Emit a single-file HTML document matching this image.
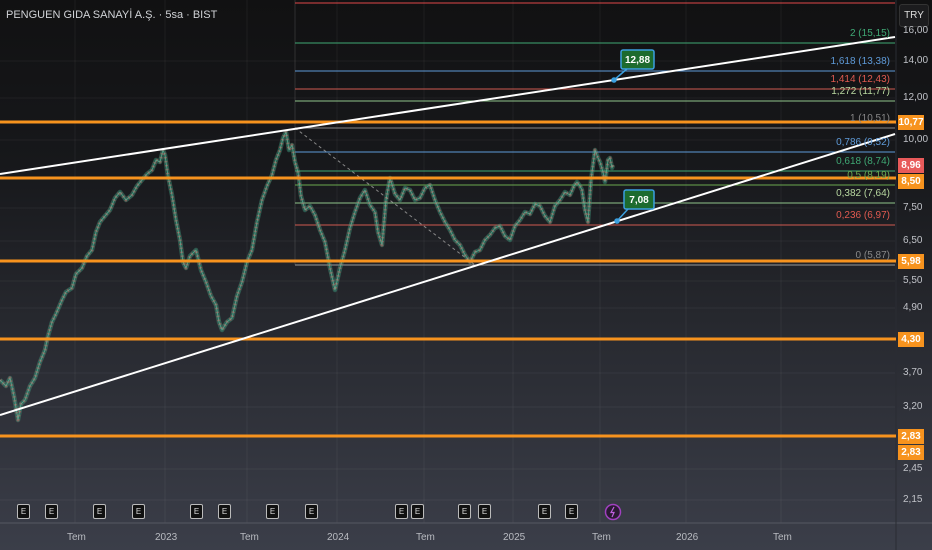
<!DOCTYPE html>
<html><head><meta charset="utf-8"><style>
html,body{margin:0;padding:0}
body{width:932px;height:550px;overflow:hidden;background:linear-gradient(#111112 0%,#17181b 30%,#2a2c33 65%,#3b3e49 100%);font-family:"Liberation Sans",sans-serif;position:relative}
.t{position:absolute;font-size:10px;color:#b8bac0;white-space:nowrap}
.ax{position:absolute;left:903px;font-size:10px;color:#c0c2c8}
.b{position:absolute;left:898px;width:26px;height:15px;font-size:10px;line-height:15px;text-align:center;color:#fff;background:#f7931e;font-weight:bold}
.e{position:absolute;top:504px;width:11px;height:13px;border:1px solid #bbb;border-radius:2px;background:#111;color:#ddd;font-size:8px;line-height:13px;text-align:center}
.f{position:absolute;font-size:10px;right:42px;white-space:nowrap}
</style></head><body>
<svg width="932" height="550" style="position:absolute;left:0;top:0">
<defs>
<polyline id="pp" points="0,380 6,386 10,378 14,396 18,420 21,404 25,400 30,386 35,378 40,362 45,350 48,336 52,322 56,314 62,300 66,292 72,288 76,274 82,268 87,256 92,250 96,232 100,222 105,216 110,210 115,198 120,192 126,200 132,195 137,186 142,180 147,174 152,170 156,160 160,162 163,150 165,155 168,176 172,195 176,220 180,240 183,262 186,268 190,256 196,250 201,270 206,282 211,296 216,305 219,322 222,330 227,322 232,318 237,296 242,282 247,262 252,250 257,222 262,200 267,186 272,175 276,160 280,150 283,138 286,132 289,150 292,145 295,162 298,172 301,196 305,210 310,206 315,215 320,230 325,242 330,268 335,290 340,268 345,250 350,228 355,212 360,198 365,190 370,205 375,212 378,232 382,245 386,200 390,178 395,194 400,200 405,188 410,190 415,200 420,198 425,188 430,185 435,200 440,212 445,222 450,230 455,240 460,245 465,255 470,262 475,252 480,250 485,240 490,235 495,228 500,226 505,236 510,240 515,226 520,220 525,212 530,214 535,204 540,206 545,216 550,222 555,206 560,200 565,192 570,195 574,186 577,182 580,186 582,190 585,210 588,222 591,180 595,150 598,158 600,162 603,172 605,182 608,160 610,158 612,168 613,165"/>
</defs>
<g stroke="#ffffff" stroke-opacity="0.05" stroke-width="1">
<line x1="75" y1="0" x2="75" y2="523"/><line x1="165" y1="0" x2="165" y2="523"/><line x1="247" y1="0" x2="247" y2="523"/><line x1="337" y1="0" x2="337" y2="523"/><line x1="424" y1="0" x2="424" y2="523"/><line x1="513" y1="0" x2="513" y2="523"/><line x1="600" y1="0" x2="600" y2="523"/><line x1="686" y1="0" x2="686" y2="523"/><line x1="781" y1="0" x2="781" y2="523"/>
<line x1="0" y1="61" x2="895" y2="61"/><line x1="0" y1="98" x2="895" y2="98"/><line x1="0" y1="140" x2="895" y2="140"/><line x1="0" y1="208" x2="895" y2="208"/><line x1="0" y1="241" x2="895" y2="241"/><line x1="0" y1="281" x2="895" y2="281"/><line x1="0" y1="308" x2="895" y2="308"/><line x1="0" y1="373" x2="895" y2="373"/><line x1="0" y1="407" x2="895" y2="407"/><line x1="0" y1="469" x2="895" y2="469"/><line x1="0" y1="500" x2="895" y2="500"/>
</g>
<line x1="0" y1="523" x2="932" y2="523" stroke="#555862" stroke-width="1"/>
<line x1="896" y1="0" x2="896" y2="550" stroke="#2a2c33" stroke-width="1"/>
<line x1="295" y1="0" x2="295" y2="265" stroke="#888" stroke-opacity="0.25"/>
<g stroke-width="1">
<line x1="295" y1="3" x2="895" y2="3" stroke="#e04848"/>
<line x1="295" y1="43" x2="895" y2="43" stroke="#3fa874"/>
<line x1="295" y1="71" x2="895" y2="71" stroke="#5e9ad8"/>
<line x1="295" y1="89" x2="895" y2="89" stroke="#d05a50"/>
<line x1="295" y1="101" x2="895" y2="101" stroke="#8fc48a"/>
<line x1="295" y1="128" x2="895" y2="128" stroke="#888"/>
<line x1="295" y1="152" x2="895" y2="152" stroke="#5e9ad8"/>
<line x1="295" y1="171" x2="895" y2="171" stroke="#3fa874"/>
<line x1="295" y1="185" x2="895" y2="185" stroke="#6aa84f"/>
<line x1="295" y1="203" x2="895" y2="203" stroke="#8fc48a"/>
<line x1="295" y1="225" x2="895" y2="225" stroke="#d05a50"/>
<line x1="295" y1="265" x2="895" y2="265" stroke="#999"/>
</g>
<line x1="295" y1="128" x2="475" y2="265" stroke="#888" stroke-dasharray="3,3"/>
<g fill="none" stroke-linejoin="round">
<use href="#pp" stroke="#3d9e80" stroke-opacity="0.45" stroke-width="4.5"/>
<use href="#pp" stroke="#c45a5a" stroke-opacity="0.6" stroke-width="3" stroke-dasharray="1.5,2.5"/>
<use href="#pp" stroke="#5fb89a" stroke-opacity="0.7" stroke-width="1"/>
</g>
<g stroke="#f7931e" stroke-width="3">
<line x1="0" y1="122" x2="896" y2="122"/><line x1="0" y1="178" x2="896" y2="178"/><line x1="0" y1="261" x2="896" y2="261"/><line x1="0" y1="339" x2="896" y2="339"/><line x1="0" y1="436" x2="896" y2="436"/>
</g>
<g stroke="#fff" stroke-width="2">
<line x1="0" y1="174" x2="895" y2="37"/>
<line x1="0" y1="415" x2="895" y2="134"/>
</g>
<g stroke="#3ba0e0" stroke-width="1.5" fill="#3ba0e0">
<line x1="614" y1="80" x2="628" y2="68"/><circle cx="614" cy="80" r="2"/>
<line x1="617" y1="221" x2="628" y2="209"/><circle cx="617" cy="221" r="2"/>
</g>
<rect x="621" y="50" width="33" height="19" rx="2" fill="#1d6b2e" stroke="#3ba0e0" stroke-width="1.5"/>
<text x="637.5" y="63" fill="#fff" font-size="10" font-weight="bold" text-anchor="middle" font-family="Liberation Sans">12,88</text>
<rect x="624" y="190" width="30" height="19" rx="2" fill="#1d6b2e" stroke="#3ba0e0" stroke-width="1.5"/>
<text x="639" y="203" fill="#fff" font-size="10" font-weight="bold" text-anchor="middle" font-family="Liberation Sans">7,08</text>
<circle cx="613" cy="512" r="7.5" fill="#2a1a33" stroke="#a040c0" stroke-width="1.5"/>
<path d="M614 507 L611 512.5 L614 512.5 L612 517" stroke="#c060e0" fill="none" stroke-width="1.2"/>
</svg>
<div class="t" style="left:6px;top:9px;font-size:11px;color:#d0d2d6">PENGUEN GIDA SANAYİ A.Ş. · 5sa · BIST</div>
<div class="f" style="top:28px;color:#3fa874">2 (15,15)</div>
<div class="f" style="top:56px;color:#5e9ad8">1,618 (13,38)</div>
<div class="f" style="top:74px;color:#e05a50">1,414 (12,43)</div>
<div class="f" style="top:86px;color:#b8d8a0">1,272 (11,77)</div>
<div class="f" style="top:113px;color:#888">1 (10,51)</div>
<div class="f" style="top:137px;color:#5e9ad8">0,786 (9,52)</div>
<div class="f" style="top:156px;color:#3fa874">0,618 (8,74)</div>
<div class="f" style="top:170px;color:#6aa84f">0,5 (8,19)</div>
<div class="f" style="top:188px;color:#b8d8a0">0,382 (7,64)</div>
<div class="f" style="top:210px;color:#e05a50">0,236 (6,97)</div>
<div class="f" style="top:250px;color:#888">0 (5,87)</div>
<div style="position:absolute;left:899px;top:4px;width:28px;height:21px;border:1px solid #333;border-radius:3px;background:#1c1c1e;color:#ddd;font-size:10px;line-height:21px;text-align:center">TRY</div>
<div class="ax" style="top:25px">16,00</div>
<div class="ax" style="top:55px">14,00</div>
<div class="ax" style="top:92px">12,00</div>
<div class="ax" style="top:134px">10,00</div>
<div class="ax" style="top:202px">7,50</div>
<div class="ax" style="top:235px">6,50</div>
<div class="ax" style="top:275px">5,50</div>
<div class="ax" style="top:302px">4,90</div>
<div class="ax" style="top:367px">3,70</div>
<div class="ax" style="top:401px">3,20</div>
<div class="ax" style="top:463px">2,45</div>
<div class="ax" style="top:494px">2,15</div>
<div class="b" style="top:115px">10,77</div>
<div class="b" style="top:158px;background:#e85a5a">8,96</div>
<div class="b" style="top:174px">8,50</div>
<div class="b" style="top:254px">5,98</div>
<div class="b" style="top:332px">4,30</div>
<div class="b" style="top:429px">2,83</div>
<div class="b" style="top:445px">2,83</div>
<div class="e" style="left:17px">E</div><div class="e" style="left:45px">E</div><div class="e" style="left:93px">E</div><div class="e" style="left:132px">E</div><div class="e" style="left:190px">E</div><div class="e" style="left:218px">E</div><div class="e" style="left:266px">E</div><div class="e" style="left:305px">E</div><div class="e" style="left:395px">E</div><div class="e" style="left:411px">E</div><div class="e" style="left:458px">E</div><div class="e" style="left:478px">E</div><div class="e" style="left:538px">E</div><div class="e" style="left:565px">E</div>
<div class="t" style="left:67px;top:532px">Tem</div>
<div class="t" style="left:155px;top:532px">2023</div>
<div class="t" style="left:240px;top:532px">Tem</div>
<div class="t" style="left:327px;top:532px">2024</div>
<div class="t" style="left:416px;top:532px">Tem</div>
<div class="t" style="left:503px;top:532px">2025</div>
<div class="t" style="left:592px;top:532px">Tem</div>
<div class="t" style="left:676px;top:532px">2026</div>
<div class="t" style="left:773px;top:532px">Tem</div>
</body></html>
